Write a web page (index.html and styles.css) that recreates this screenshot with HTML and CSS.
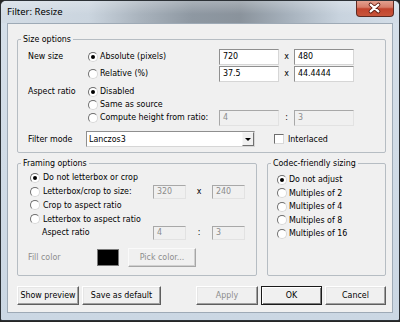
FILE: index.html
```html
<!DOCTYPE html>
<html>
<head>
<meta charset="utf-8">
<title>Filter: Resize</title>
<link rel="stylesheet" href="styles.css">
</head>
<body>
<div class="window">
  <div class="titlebar">
    <span class="title">Filter: Resize</span>
    <div class="close">
      <svg width="38" height="17" viewBox="0 0 38 17">
        <path d="M15 4.5 L23 11.5 M23 4.5 L15 11.5" stroke="#5a1a10" stroke-width="4" stroke-linecap="round" fill="none"/>
        <path d="M15 4.5 L23 11.5 M23 4.5 L15 11.5" stroke="#ffffff" stroke-width="2.2" stroke-linecap="round" fill="none"/>
      </svg>
    </div>
  </div>
  <div class="client">
    <fieldset class="group">
      <legend>Size options</legend>
      <div class="size-body">
        <div class="row h17">
          <span class="lbl">New size</span>
          <span class="opt"><span class="radio checked"></span>Absolute (pixels)</span>
          <span class="edit">720</span><span class="sep">x</span><span class="edit">480</span>
        </div>
        <div class="row h17">
          <span class="lbl"></span>
          <span class="opt"><span class="radio"></span>Relative (%)</span>
          <span class="edit">37.5</span><span class="sep">x</span><span class="edit">44.4444</span>
        </div>
        <div class="row h13 mt3">
          <span class="lbl">Aspect ratio</span>
          <span class="opt"><span class="radio checked"></span>Disabled</span>
        </div>
        <div class="row h13">
          <span class="lbl"></span>
          <span class="opt"><span class="radio"></span>Same as source</span>
        </div>
        <div class="row h13">
          <span class="lbl"></span>
          <span class="opt"><span class="radio"></span>Compute height from ratio:</span>
          <span class="edit disabled">4</span><span class="sep">:</span><span class="edit disabled">3</span>
        </div>
        <div class="row h16 mt7">
          <span class="lbl short">Filter mode</span>
          <span class="combo"><span class="combo-text">Lanczos3</span><span class="combo-btn"><span class="arrow"></span></span></span>
          <span class="check"></span><span>Interlaced</span>
        </div>
      </div>
    </fieldset>

    <div class="lower">
      <fieldset class="group framing">
        <legend>Framing options</legend>
        <div class="fbody">
          <div class="row fr"><span class="fopt"><span class="radio checked"></span>Do not letterbox or crop</span></div>
          <div class="row fr"><span class="fopt"><span class="radio"></span>Letterbox/crop to size:</span><span class="edit sm disabled">320</span><span class="sep2">x</span><span class="edit sm disabled">240</span></div>
          <div class="row fr"><span class="fopt"><span class="radio"></span>Crop to aspect ratio</span></div>
          <div class="row fr"><span class="fopt"><span class="radio"></span>Letterbox to aspect ratio</span></div>
          <div class="row fr"><span class="fopt indent">Aspect ratio</span><span class="edit sm disabled">4</span><span class="sep2">:</span><span class="edit sm disabled">3</span></div>
          <div class="row fill"><span class="fill-lbl">Fill color</span><span class="swatch"></span><span class="btn disabled pick">Pick color...</span></div>
        </div>
      </fieldset>
      <fieldset class="group codec">
        <legend>Codec-friendly sizing</legend>
        <div class="cbody">
          <div class="row cr"><span class="radio checked"></span>Do not adjust</div>
          <div class="row cr"><span class="radio"></span>Multiples of 2</div>
          <div class="row cr"><span class="radio"></span>Multiples of 4</div>
          <div class="row cr"><span class="radio"></span>Multiples of 8</div>
          <div class="row cr"><span class="radio"></span>Multiples of 16</div>
        </div>
      </fieldset>
    </div>

    <div class="buttons">
      <span class="btn w62">Show preview</span>
      <span class="btn w79">Save as default</span>
      <span class="btn w62 disabled push">Apply</span>
      <span class="btn w61 default">OK</span>
      <span class="btn w61">Cancel</span>
    </div>
  </div>
</div>
</body>
</html>
```

FILE: styles.css
```css
* { box-sizing: border-box; }
html, body { margin: 0; padding: 0; }
body {
  width: 400px;
  height: 322px;
  overflow: hidden;
  background: #262626;
  font-family: "DejaVu Sans Condensed", "DejaVu Sans", sans-serif;
  font-size: 8.8px;
  line-height: 11px;
  color: #000;
}
.window {
  width: 400px;
  height: 321px;
  border: 1px solid #2c3136;
  border-radius: 6px 6px 2px 2px;
  background: linear-gradient(180deg, #d6e0ea 0%, #cbd7e3 100%);
  display: flex;
  flex-direction: column;
  overflow: hidden;
}
.titlebar {
  height: 22px;
  flex: none;
  display: flex;
  align-items: flex-start;
  justify-content: space-between;
  padding-left: 6px;
  padding-right: 5px;
  background:
    linear-gradient(180deg, rgba(255,255,255,0.25) 0%, rgba(255,255,255,0) 60%),
    linear-gradient(90deg, #d3dce5 0%, #cbd5df 22%, #a9b3bd 35%, #8e98a2 48%, #8a939c 60%, #a6b1bc 72%, #c8d3de 85%, #d4dee8 100%);
}
.title {
  font-family: "Noto Sans", "DejaVu Sans", sans-serif;
  font-size: 9.5px;
  line-height: 22px;
  color: #000;
}
.close {
  width: 38px;
  height: 17px;
  margin-top: -1px;
  border: 1px solid #5d2a22;
  border-top: none;
  border-radius: 0 0 4px 4px;
  background: linear-gradient(180deg, #e5a595 0%, #d77e6a 45%, #c2432d 55%, #c8553b 100%);
  display: flex;
}
.close svg { display: block; margin-left: -1px; }
.client {
  flex: 1;
  margin: 0 6px 7px 6px;
  background: #f0f0f0;
  border: 1px solid #9eaab6;
  padding: 10px 6px 6px 9px;
  display: flex;
  flex-direction: column;
}
.group {
  margin: 0;
  padding: 0;
  min-width: 0;
  border: 1px solid #b6bdc3;
  border-radius: 2px;
}
.group legend {
  margin-left: 3px;
  padding: 0 2px;
  line-height: 11px;
  height: 11px;
}
.size-body { padding: 3px 0 5px 10px; }
.row { display: flex; align-items: center; white-space: nowrap; }
.h17 { height: 17px; }
.h13 { height: 13px; }
.h16 { height: 16px; }
.mt3 { margin-top: 3px; }
.mt7 { margin-top: 7px; }
.lbl { width: 60px; flex: none; }
.lbl.short { width: 58px; }
.opt { width: 131px; flex: none; display: flex; align-items: center; }
.radio {
  width: 10px;
  height: 10px;
  flex: none;
  border-radius: 50%;
  border: 1px solid;
  border-color: #6e6e6e #d8d8d8 #d8d8d8 #6e6e6e;
  background: #fff;
  margin-right: 2px;
  display: flex;
  align-items: center;
  justify-content: center;
}
.radio.checked::after {
  content: "";
  width: 4px;
  height: 4px;
  border-radius: 50%;
  background: #000;
}
.edit {
  width: 60px;
  height: 16px;
  flex: none;
  background: #fff;
  border: 1px solid;
  border-color: #8f8f8f #d6d6d6 #d6d6d6 #8f8f8f;
  padding-left: 3px;
  display: flex;
  align-items: center;
}
.edit.disabled { background: #f0f0f0; color: #8c8c8c; border-color: #a8a8a8 #e2e2e2 #e2e2e2 #a8a8a8; }
.edit.sm { width: 33px; height: 14px; }
.sep { width: 15px; flex: none; text-align: center; }
.sep2 { width: 26px; flex: none; text-align: center; }
.combo {
  width: 169px;
  height: 16px;
  flex: none;
  margin-right: 19px;
  background: #fff;
  border: 1px solid;
  border-color: #8f8f8f #d6d6d6 #d6d6d6 #8f8f8f;
  display: flex;
  align-items: center;
}
.combo-text { flex: 1; padding-left: 2px; }
.combo-btn {
  width: 12px;
  height: 14px;
  flex: none;
  background: #f0f0f0;
  border: 1px solid;
  border-color: #f8f8f8 #707070 #707070 #f8f8f8;
  display: flex;
  align-items: center;
  justify-content: center;
}
.arrow {
  width: 0;
  height: 0;
  border-left: 3px solid transparent;
  border-right: 3px solid transparent;
  border-top: 3px solid #000;
}
.check {
  width: 10px;
  height: 10px;
  flex: none;
  background: #fff;
  border: 1px solid;
  border-color: #6e6e6e #d8d8d8 #d8d8d8 #6e6e6e;
  margin-right: 4px;
}
.lower { display: flex; gap: 10px; margin-top: 5px; }
.framing { width: 240px; flex: none; }
.codec { flex: 1; }
.fbody { padding: 2px 0 8px 10px; }
.fr { height: 13.75px; }
.fopt { width: 125px; flex: none; display: flex; align-items: center; padding-left: 2px; }
.fopt .radio { margin-right: 3px; }
.fopt.indent { padding-left: 14px; }
.fill { height: 19px; margin-top: 8px; }
.fill-lbl { width: 69px; flex: none; color: #8c8c8c; }
.swatch {
  width: 22px;
  height: 17px;
  flex: none;
  background: #000;
  border: 1px solid #7a7a7a;
  margin-right: 9px;
}
.cbody { padding: 4px 0 0 9px; }
.cr { height: 13.5px; }
.buttons { display: flex; gap: 3px; margin-top: 10px; }
.btn {
  height: 19px;
  flex: none;
  display: flex;
  align-items: center;
  justify-content: center;
  background: #f0f0f0;
  border: 1px solid;
  border-color: #ffffff #5e5e5e #5e5e5e #ffffff;
  box-shadow: inset -1px -1px 0 #a0a0a0, inset 1px 1px 0 #e6e6e6;
}
.btn.disabled { color: #8c8c8c; }
.btn.default { border-color: #1a1a1a; box-shadow: inset 1px 1px 0 #fff, inset -1px -1px 0 #7a7a7a; }
.btn.pick { width: 68px; border-color: #fafafa #a6a6a6 #a6a6a6 #fafafa; box-shadow: inset -1px -1px 0 #d0d0d0; }
.w62 { width: 62px; }
.w79 { width: 79px; }
.w61 { width: 61px; }
.push { margin-left: auto; }
```
